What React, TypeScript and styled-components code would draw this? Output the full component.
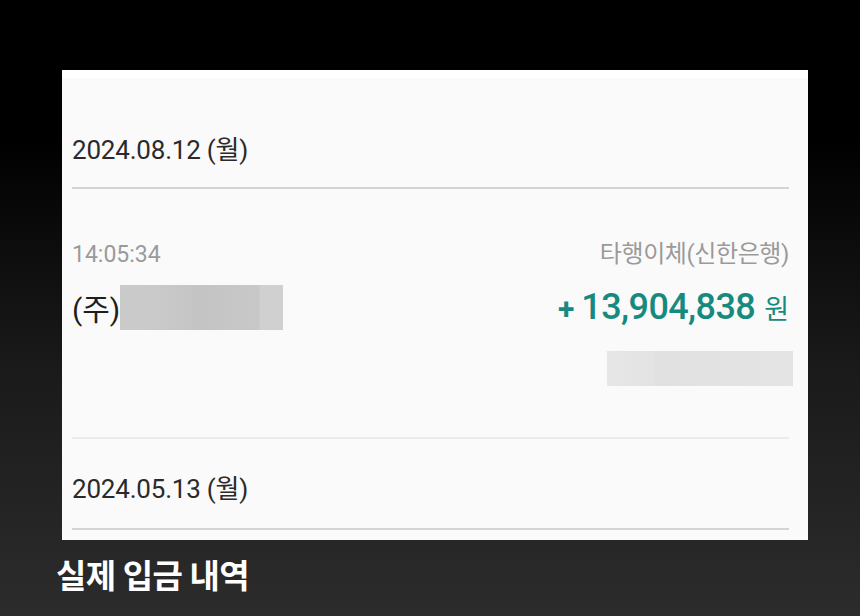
import React from "react";
import styled, { createGlobalStyle } from "styled-components";

const Global = createGlobalStyle`
  html, body { margin: 0; padding: 0; }
  body { width: 860px; height: 616px; overflow: hidden; background: #000; }
  * { box-sizing: border-box; }
`;

const Page = styled.div`
  width: 860px;
  height: 616px;
  display: flex;
  flex-direction: column;
  background: linear-gradient(180deg, #000 0%, #000 22%, #1a1a1a 60%, #2c2c2c 100%);
  font-family: Roboto, "Noto Sans CJK KR", sans-serif;
`;

const Card = styled.div`
  margin: 70px 0 0 62px;
  width: 746px;
  height: 470px;
  background: #fafafa;
  border-top: 8px solid #fff;
  display: flex;
  flex-direction: column;
  padding: 0 19px 0 10px;
`;

const DateRow = styled.div<{ $top: number; $bottom: number }>`
  padding-top: ${(p) => p.$top}px;
  padding-bottom: ${(p) => p.$bottom}px;
  font-size: 26px;
  line-height: 30px;
  color: #2a2a2a;
  letter-spacing: -0.2px;
`;

const Divider = styled.div<{ $light?: boolean }>`
  height: 2px;
  background: ${(p) => (p.$light ? "#ebebeb" : "#d4d4d4")};
`;

const TxBlock = styled.div`
  display: flex;
  flex-direction: column;
  padding-top: 51px;
  padding-bottom: 51px;
`;

const MetaRow = styled.div`
  display: flex;
  justify-content: space-between;
  align-items: baseline;
  height: 29px;
  font-size: 23px;
  line-height: 29px;
  color: #9a9a9a;
`;

const BankName = styled.span`
  font-size: 24px;
  letter-spacing: -0.4px;
`;

const NameRow = styled.div`
  margin-top: 15px;
  height: 46px;
  display: flex;
  align-items: center;
  justify-content: space-between;
`;

const Name = styled.div`
  display: flex;
  align-items: center;
  font-size: 30px;
  color: #1e1e1e;
`;

const Blur = styled.div<{ $w: number; $h: number }>`
  width: ${(p) => p.$w}px;
  height: ${(p) => p.$h}px;
`;

const NameBlur = styled(Blur)`
  background: linear-gradient(90deg, #cbcbcb 0%, #c9c9c9 25%, #c4c4c4 50%, #c8c8c8 85%, #d0d0d0 86%, #d0d0d0 100%);
`;

const Amount = styled.div`
  display: flex;
  align-items: baseline;
  color: #178a80;
`;

const Plus = styled.span`
  font-size: 30px;
  font-weight: 700;
  margin-right: 7px;
`;

const Digits = styled.span`
  font-size: 36px;
  font-weight: 500;
  letter-spacing: -0.6px;
`;

const Won = styled.span`
  font-size: 27px;
  font-weight: 400;
  margin-left: 9px;
  font-family: "Noto Sans CJK KR", sans-serif;
`;

const SubBlur = styled(Blur)`
  align-self: flex-end;
  margin-top: 21px;
  margin-right: -4px;
  background: linear-gradient(90deg, #e6e6e6 0%, #e3e3e3 25%, #e1e1e1 26%, #e4e4e4 100%);
`;

const Caption = styled.div`
  margin: 14px 0 0 56px;
  font-family: "Noto Sans CJK KR", sans-serif;
  font-size: 33px;
  line-height: 40px;
  font-weight: 700;
  color: #fff;
  letter-spacing: -0.5px;
`;

export default function App() {
  return (
    <>
      <Global />
      <Page>
        <Card>
          <DateRow $top={57} $bottom={22}>2024.08.12 (월)</DateRow>
          <Divider />
          <TxBlock>
            <MetaRow>
              <span>14:05:34</span>
              <BankName>타행이체(신한은행)</BankName>
            </MetaRow>
            <NameRow>
              <Name>
                (주)
                <NameBlur $w={163} $h={45} />
              </Name>
              <Amount>
                <Plus>+</Plus>
                <Digits>13,904,838</Digits>
                <Won>원</Won>
              </Amount>
            </NameRow>
            <SubBlur $w={186} $h={35} />
          </TxBlock>
          <Divider $light />
          <DateRow $top={35} $bottom={24}>2024.05.13 (월)</DateRow>
          <Divider />
        </Card>
        <Caption>실제 입금 내역</Caption>
      </Page>
    </>
  );
}
